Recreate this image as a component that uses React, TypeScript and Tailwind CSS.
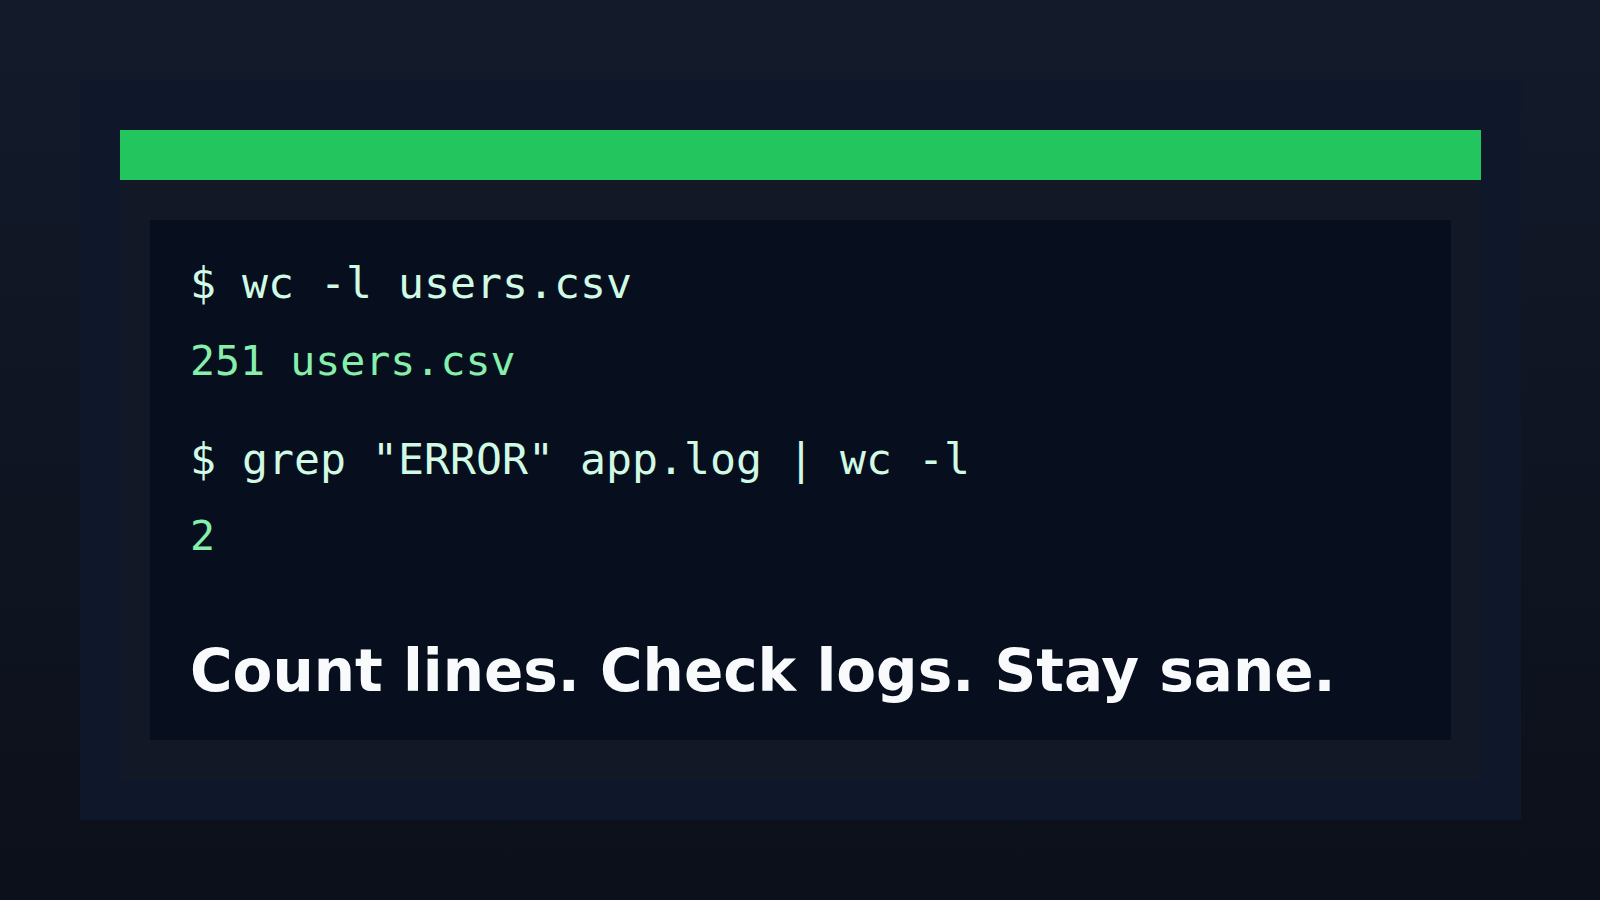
import React from 'react';

const mono = { fontFamily: '"DejaVu Sans Mono", "Liberation Mono", monospace' };

const lines = [
    { cmd: '$ wc -l users.csv', out: '251 users.csv', gap: 'mt-[28px]' },
    { cmd: '$ grep "ERROR" app.log | wc -l', out: '2', gap: 'mt-[27px]' },
];

const App: React.FC = () => {
    return (
        <div className="w-full h-[900px] bg-gradient-to-b from-[#131a2a] to-[#0b101a] pl-20 pr-[79px] py-20">
            {/* outer frame */}
            <div className="h-[740px] bg-[#0f172a] px-10 pt-[50px] pb-10">
                {/* card */}
                <div className="h-[650px] bg-[#121826] flex flex-col">
                    <div className="h-[50px] bg-[#22c55e]" />
                    <div className="px-[30px] pt-10">
                        {/* terminal */}
                        <div className="h-[520px] bg-[#070f1e] px-10 pt-[38px]" style={mono}>
                            {lines.map((l, i) => (
                                <div key={i} className={i > 0 ? 'mt-[48px]' : ''}>
                                    <div className="text-[43.2px] leading-[50px] text-[#d1fae5] whitespace-pre">{l.cmd}</div>
                                    <div className={`${l.gap} text-[41.6px] leading-[50px] text-[#86efac] whitespace-pre`}>{l.out}</div>
                                </div>
                            ))}
                            <h1
                                className="mt-[81px] text-[58px] leading-none font-bold text-[#f8fafc] whitespace-nowrap"
                                style={{ fontFamily: '"DejaVu Sans", "Liberation Sans", sans-serif' }}
                            >
                                Count lines. Check logs. Stay sane.
                            </h1>
                        </div>
                    </div>
                </div>
            </div>
        </div>
    );
};

export default App;
